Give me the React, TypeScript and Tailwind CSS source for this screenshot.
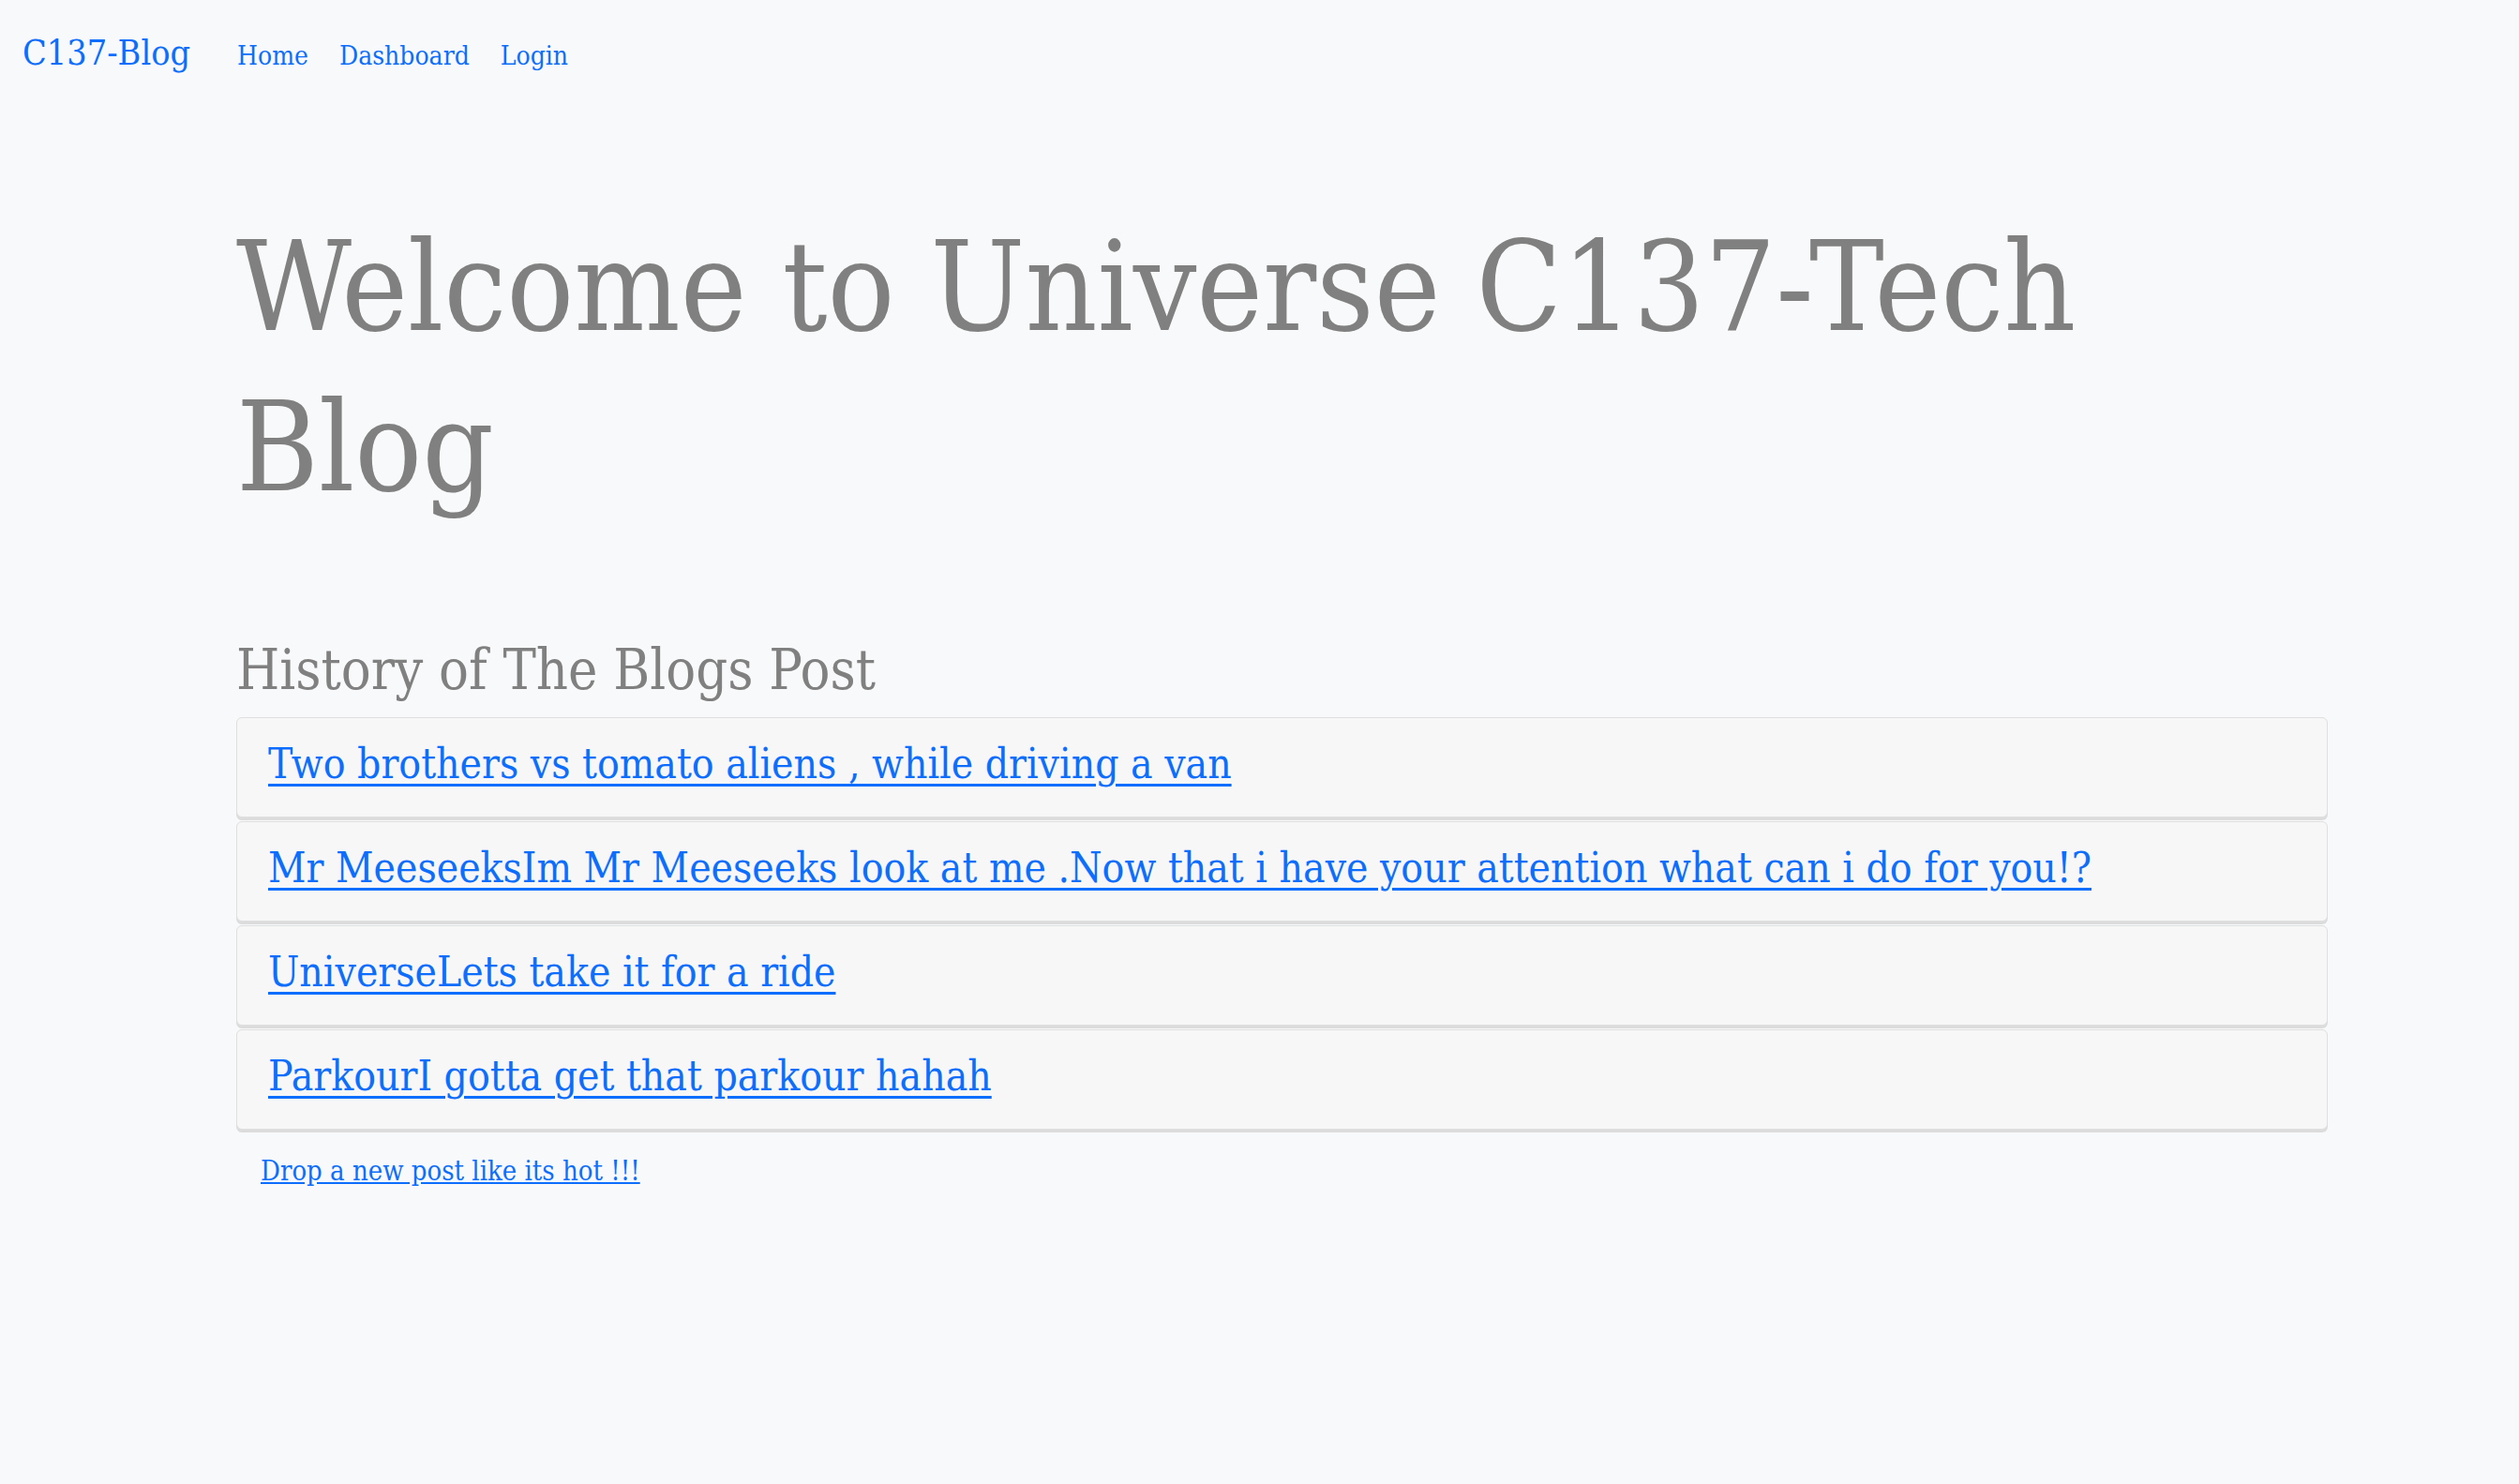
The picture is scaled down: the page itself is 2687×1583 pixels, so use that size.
import React from 'react';

const posts = [
  'Two brothers vs tomato aliens , while driving a van',
  'Mr MeeseeksIm Mr Meeseeks look at me .Now that i have your attention what can i do for you!?',
  'UniverseLets take it for a ride',
  'ParkourI gotta get that parkour hahah',
];

export default function App() {
  return (
    <div className="min-h-[1583px] bg-[#f8f9fa] font-['DejaVu_Serif',serif] [font-stretch:condensed]">
      {/* navbar */}
      <nav className="flex items-baseline px-[24px] pt-[38px]">
        <a href="#" className="text-[37.5px] leading-none text-[#0d6efd] mr-[50px]">C137-Blog</a>
        <div className="flex items-baseline gap-[33px] text-[28px] leading-none text-[#0d6efd]">
          <a href="#">Home</a>
          <a href="#">Dashboard</a>
          <a href="#">Login</a>
        </div>
      </nav>

      <main className="ml-[252px] w-[2231px] pt-[145px]">
        <h1 className="text-[133px] leading-[171px] font-light text-[#808080]">
          Welcome to Universe C137-Tech Blog
        </h1>

        <h2 className="mt-[115px] text-[59px] leading-tight text-[#808080]">History of The Blogs Post</h2>

        <ul className="mt-[14px] flex flex-col gap-[4px]">
          {posts.map(p => (
            <li
              key={p}
              className="h-[107px] rounded-[6px] border border-[#dfdfdf] bg-[#f7f7f7] px-[33px] pt-[21px] shadow-[0_3px_0_#dcdcdc]"
            >
              <a href="#" className="text-[44px] leading-tight text-[#0d6efd] underline decoration-[3px] underline-offset-[6px]">
                {p}
              </a>
            </li>
          ))}
        </ul>

        <a href="#" className="mt-[23px] ml-[26px] inline-block text-[29px] text-[#0d6efd] underline">
          Drop a new post like its hot !!!
        </a>
      </main>
    </div>
  );
}
